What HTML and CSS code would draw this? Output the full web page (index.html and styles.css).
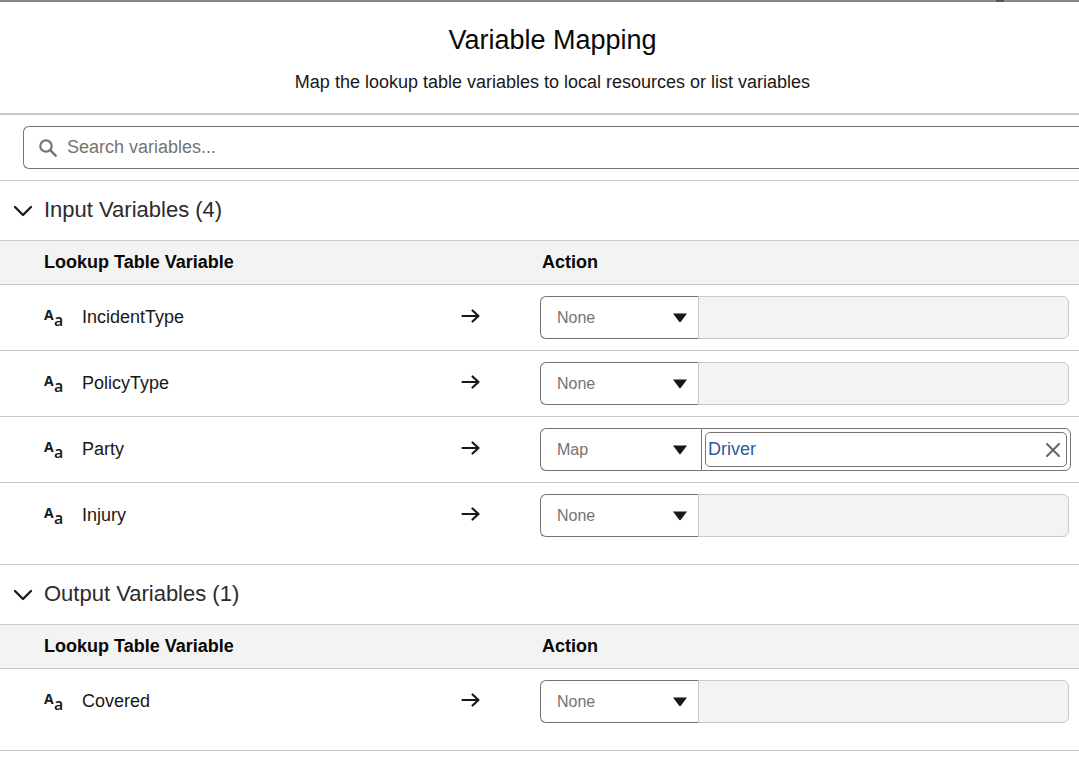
FILE: index.html
```html
<!DOCTYPE html>
<html lang="en">
<head>
<meta charset="utf-8">
<title>Variable Mapping</title>
<link rel="stylesheet" href="styles.css">
</head>
<body>
<svg class="sprite" aria-hidden="true">
  <symbol id="arrow" viewBox="0 0 20 16"><path d="M1.500 8H17.500M11.500 2.500L17.500 8L11.500 13.500" fill="none" stroke="currentColor" stroke-width="2.200" stroke-linecap="round" stroke-linejoin="round"/></symbol>
  <symbol id="chevron" viewBox="0 0 20 14"><path d="M2 3L10 11L18 3" fill="none" stroke="currentColor" stroke-width="2.300" stroke-linecap="round" stroke-linejoin="round"/></symbol>
  <symbol id="caret" viewBox="0 0 16 10"><path d="M1 0.500H15L8.600 9Q8 9.600 7.400 9Z" fill="currentColor"/></symbol>
</svg>
<main class="dialog">
  <div class="topline"><span class="notch"></span></div>
  <header class="header">
    <h1 class="title">Variable Mapping</h1>
    <p class="subtitle">Map the lookup table variables to local resources or list variables</p>
  </header>
  <div class="search">
    <label class="search-box">
      <svg class="search-icon" viewBox="0 0 18 18" aria-hidden="true"><circle cx="7" cy="7" r="5.700" fill="none" stroke="currentColor" stroke-width="2.200"/><path d="M11.200 11.200L16.600 16.600" stroke="currentColor" stroke-width="2.500" stroke-linecap="round"/></svg>
      <input class="search-input" type="search" placeholder="Search variables..." aria-label="Search variables">
    </label>
  </div>

  <section class="section">
    <h2 class="section-title"><button class="toggle" type="button" aria-expanded="true"><svg class="chevron"><use href="#chevron"/></svg><span class="toggle-label">Input Variables (4)</span></button></h2>
    <table class="table">
      <thead><tr><th class="col-name">Lookup Table Variable</th><th class="col-arrow"></th><th class="col-action">Action</th></tr></thead>
      <tbody>
        <tr>
          <td class="name"><div class="variable"><span class="type" aria-hidden="true"><b class="upper">A</b><span class="lower">a</span></span>IncidentType</div></td>
          <td class="to"><svg class="arrow"><use href="#arrow"/></svg></td>
          <td><div class="control"><div class="picker"><select class="select" aria-label="IncidentType action"><option>None</option><option>Map</option></select><svg class="caret"><use href="#caret"/></svg></div><input class="value" type="text" aria-label="IncidentType value" disabled></div></td>
        </tr>
        <tr>
          <td class="name"><div class="variable"><span class="type" aria-hidden="true"><b class="upper">A</b><span class="lower">a</span></span>PolicyType</div></td>
          <td class="to"><svg class="arrow"><use href="#arrow"/></svg></td>
          <td><div class="control"><div class="picker"><select class="select" aria-label="PolicyType action"><option>None</option><option>Map</option></select><svg class="caret"><use href="#caret"/></svg></div><input class="value" type="text" aria-label="PolicyType value" disabled></div></td>
        </tr>
        <tr>
          <td class="name"><div class="variable"><span class="type" aria-hidden="true"><b class="upper">A</b><span class="lower">a</span></span>Party</div></td>
          <td class="to"><svg class="arrow"><use href="#arrow"/></svg></td>
          <td class="mapped"><div class="control"><div class="picker picker-mapped"><select class="select" aria-label="Party action"><option>Map</option><option>None</option></select><svg class="caret"><use href="#caret"/></svg></div><div class="resource"><div class="resource-box"><input class="resource-input" type="text" value="Driver" aria-label="Party value"><button class="clear" type="button" aria-label="Clear"><svg class="clear-icon" viewBox="0 0 14 14"><path d="M1 1L13 13M13 1L1 13" stroke="currentColor" stroke-width="2" stroke-linecap="round"/></svg></button></div></div></div></td>
        </tr>
        <tr>
          <td class="name"><div class="variable"><span class="type" aria-hidden="true"><b class="upper">A</b><span class="lower">a</span></span>Injury</div></td>
          <td class="to"><svg class="arrow"><use href="#arrow"/></svg></td>
          <td><div class="control"><div class="picker"><select class="select" aria-label="Injury action"><option>None</option><option>Map</option></select><svg class="caret"><use href="#caret"/></svg></div><input class="value" type="text" aria-label="Injury value" disabled></div></td>
        </tr>
      </tbody>
    </table>
  </section>

  <section class="section">
    <h2 class="section-title"><button class="toggle" type="button" aria-expanded="true"><svg class="chevron"><use href="#chevron"/></svg><span class="toggle-label">Output Variables (1)</span></button></h2>
    <table class="table">
      <thead><tr><th class="col-name">Lookup Table Variable</th><th class="col-arrow"></th><th class="col-action">Action</th></tr></thead>
      <tbody>
        <tr>
          <td class="name"><div class="variable"><span class="type" aria-hidden="true"><b class="upper">A</b><span class="lower">a</span></span>Covered</div></td>
          <td class="to"><svg class="arrow"><use href="#arrow"/></svg></td>
          <td><div class="control"><div class="picker"><select class="select" aria-label="Covered action"><option>None</option><option>Map</option></select><svg class="caret"><use href="#caret"/></svg></div><input class="value" type="text" aria-label="Covered value" disabled></div></td>
        </tr>
      </tbody>
    </table>
  </section>
</main>
</body>
</html>
```

FILE: styles.css
```css
* { box-sizing: border-box; }
body {
  margin: 0;
  background: #fff;
  color: #181818;
  font-family: "Liberation Sans", Arial, sans-serif;
  font-size: 18px;
  line-height: 24px;
}
input, select, button { font: inherit; color: inherit; margin: 0; }
svg { display: block; flex: none; }
.sprite { position: absolute; width: 0; height: 0; }
.dialog { overflow: hidden; }
.topline {
  display: flex;
  justify-content: flex-end;
  height: 2px;
  padding-right: 75px;
  background: #8a8888;
}
.notch { width: 8px; background: #555; }
.header {
  padding: 20px 0 19px 26px;
  border-bottom: 2px solid #c9c9c9;
  text-align: center;
}
.title {
  margin: 0 0 12px;
  color: #080808;
  font-size: 27px;
  font-weight: 400;
  line-height: 36px;
}
.subtitle { margin: 0; }
.search {
  padding: 11px 0 11px 23px;
  border-bottom: 1px solid #c9c9c9;
}
.search-box {
  display: flex;
  align-items: center;
  gap: 10px;
  height: 43px;
  padding-left: 15px;
  border: 1px solid #747474;
  border-right: 0;
  border-radius: 6px 0 0 6px;
  color: #747474;
}
.search-icon { width: 18px; height: 18px; }
.search-input {
  flex: 1;
  min-width: 0;
  padding: 0 0 2px;
  border: 0;
  outline: 0;
  background: none;
  appearance: none;
}
.search-input::placeholder { color: #747474; opacity: 1; }
.section {
  padding-bottom: 16px;
  border-bottom: 1px solid #c9c9c9;
}
.section-title { margin: 0; font-size: 22px; font-weight: 400; }
.toggle {
  display: flex;
  align-items: center;
  gap: 11px;
  width: 100%;
  height: 59px;
  padding: 0 13px;
  border: 0;
  background: none;
  color: #2b2b2b;
}
.toggle-label { padding-bottom: 2px; }
.chevron { width: 20px; height: 14px; color: #181818; }
.table {
  width: 100%;
  table-layout: fixed;
  border-spacing: 0;
}
th {
  height: 45px;
  padding: 0 0 2px;
  border-top: 1px solid #c9c9c9;
  border-bottom: 1px solid #c9c9c9;
  background: #f3f3f3;
  color: #080808;
  text-align: left;
}
.col-name { width: 461px; padding-left: 44px; }
.col-arrow { width: 79px; }
.col-action { padding-left: 2px; }
td {
  padding: 11px 10px 11px 0;
  border-bottom: 1px solid #c9c9c9;
}
tbody tr:last-child td { border-bottom: 0; }
td.name { padding: 9px 0 11px 44px; }
td.to { padding: 8px 0 11px; }
td.mapped { padding-right: 8px; }
.variable { display: flex; align-items: center; gap: 18px; }
.type {
  display: flex;
  align-items: flex-start;
  width: 20px;
  height: 24px;
  font-family: "Open Sans", sans-serif;
}
.upper { width: 10px; font-size: 14px; font-weight: 700; line-height: 20px; }
.lower { padding-top: 5px; font-size: 16px; font-weight: 600; line-height: 20px; }
.arrow { width: 20px; height: 16px; }
.control { display: flex; height: 43px; }
.picker {
  display: grid;
  align-items: center;
  width: 158px;
  border: 1px solid #747474;
  border-right: 0;
  border-radius: 6px 0 0 6px;
}
.picker-mapped { width: 161px; }
.select, .caret { grid-area: 1 / 1; }
.select {
  width: 100%;
  height: 41px;
  padding: 0 30px 0 16px;
  border: 0;
  outline: 0;
  background: none;
  appearance: none;
  color: #747474;
  font-size: 16px;
}
.caret {
  width: 16px;
  height: 10px;
  margin-left: 131px;
  pointer-events: none;
}
.value {
  flex: 1;
  min-width: 0;
  border: 1px solid #c9c9c9;
  border-radius: 0 6px 6px 0;
  background: #f3f3f3;
}
.resource {
  flex: 1;
  min-width: 0;
  padding: 3px;
  border: 1px solid #747474;
  border-radius: 0 6px 6px 0;
}
.resource-box {
  display: flex;
  align-items: center;
  height: 35px;
  padding: 0 6px 0 2px;
  border: 1px solid #747474;
  border-radius: 5px;
}
.resource-input {
  flex: 1;
  min-width: 0;
  padding: 0 0 2px;
  border: 0;
  outline: 0;
  background: none;
  color: #2a5a9e;
}
.clear { padding: 0; border: 0; background: none; color: #666; }
.clear-icon { width: 14px; height: 14px; }
```
